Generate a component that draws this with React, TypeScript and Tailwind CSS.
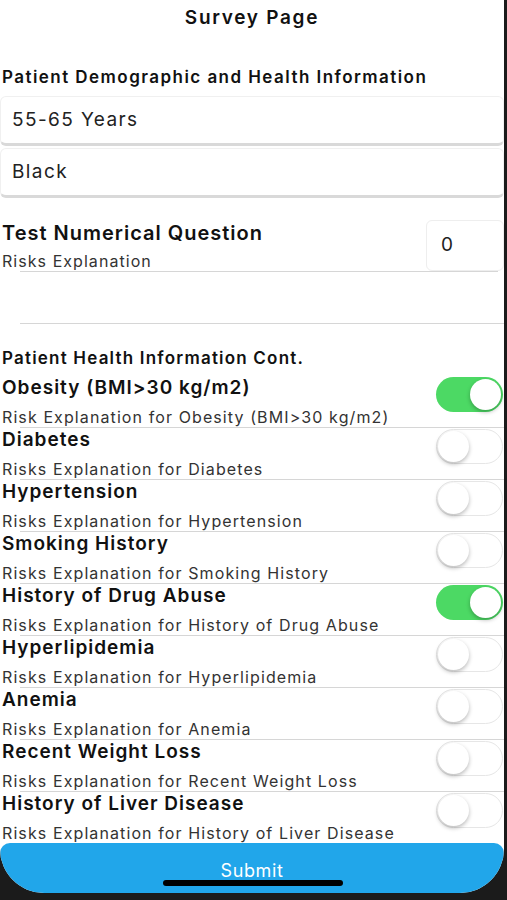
import React from 'react';

const conditions = [
    { name: 'Obesity (BMI>30 kg/m2)', note: 'Risk Explanation for Obesity (BMI>30 kg/m2)', on: true },
    { name: 'Diabetes', note: 'Risks Explanation for Diabetes', on: false },
    { name: 'Hypertension', note: 'Risks Explanation for Hypertension', on: false },
    { name: 'Smoking History', note: 'Risks Explanation for Smoking History', on: false },
    { name: 'History of Drug Abuse', note: 'Risks Explanation for History of Drug Abuse', on: true },
    { name: 'Hyperlipidemia', note: 'Risks Explanation for Hyperlipidemia', on: false },
    { name: 'Anemia', note: 'Risks Explanation for Anemia', on: false },
    { name: 'Recent Weight Loss', note: 'Risks Explanation for Recent Weight Loss', on: false },
    { name: 'History of Liver Disease', note: 'Risks Explanation for History of Liver Disease', on: false },
];

function Toggle({ on }: { on: boolean }) {
    return (
        <div
            className={
                on
                    ? 'flex h-[35px] w-[67px] items-center justify-end rounded-full bg-[#4cd964] px-[2px]'
                    : 'flex h-[35px] w-[67px] items-center justify-start rounded-full border border-[#e6e6e6] bg-white px-[1px]'
            }
        >
            <div className="h-[31px] w-[31px] rounded-full bg-white shadow-[0_2px_4px_rgba(0,0,0,0.28)]" />
        </div>
    );
}

function SelectBox({ label }: { label: string }) {
    return (
        <div className="flex h-[50px] items-center rounded-md border border-[#f0f0f0] border-b-[3px] border-b-[#d9d9d9] bg-white px-[11px] text-[19px] tracking-[1.4px] text-[#222]">
            {label}
        </div>
    );
}

export default function App() {
    return (
        <div className="h-[900px] w-[507px] bg-[#1b1b1b] font-['Inter',sans-serif]">
            <div className="relative flex h-[893px] w-[504px] flex-col overflow-hidden rounded-b-[44px] bg-white">
                <div className="flex h-[36px] items-center justify-center text-[19px] font-semibold tracking-[1.7px] text-[#111]">
                    Survey Page
                </div>
                <div className="flex-1 overflow-hidden">
                    <div className="mt-[29px] px-[2px] text-[17px] font-semibold leading-[24px] tracking-[1.45px] text-[#111]">
                        Patient Demographic and Health Information
                    </div>
                    <div className="mt-[7px] flex flex-col gap-[2px]">
                        <SelectBox label="55-65 Years" />
                        <SelectBox label="Black" />
                    </div>

                    <div className="relative mt-[22px] flex h-[52px] justify-between">
                        <div className="px-[2px]">
                            <div className="text-[20px] font-semibold leading-[26px] tracking-[1px] text-[#111]">Test Numerical Question</div>
                            <div className="mt-[5px] text-[16px] leading-[20px] tracking-[1.05px] text-[#333]">Risks Explanation</div>
                        </div>
                        <div className="flex h-[51px] w-[78px] items-center rounded-md border border-[#eeeeee] px-[14px] text-[19px] text-[#222]">
                            0
                        </div>
                        <div className="absolute bottom-0 left-[20px] right-[6px] h-px bg-[#d6d6d6]" />
                    </div>
                    <div className="ml-[20px] mt-[51px] h-px bg-[#d6d6d6]" />

                    <div className="mt-[22px] px-[2px] text-[17px] font-semibold leading-[24px] tracking-[1.2px] text-[#111]">
                        Patient Health Information Cont.
                    </div>
                    <div className="mt-[6px]">
                        {conditions.map((c, idx) => (
                            <div key={idx} className="relative flex h-[52px] justify-between">
                                <div className="px-[2px]">
                                    <div className="text-[19px] font-semibold leading-[24px] tracking-[1px] text-[#111]">{c.name}</div>
                                    <div className="mt-[6px] text-[16px] leading-[22px] tracking-[1.1px] text-[#333]">{c.note}</div>
                                </div>
                                <div className="mt-[1px] pr-[1px]">
                                    <Toggle on={c.on} />
                                </div>
                                <div className="absolute bottom-0 left-[20px] right-0 h-px bg-[#d6d6d6]" />
                            </div>
                        ))}
                    </div>
                </div>
                <div className="flex h-[50px] items-center justify-center rounded-t-[10px] bg-[#21a6ea] pt-[4px] text-[18px] tracking-[0.6px] text-white">
                    Submit
                </div>
                <div className="absolute bottom-[7px] left-[163px] h-[6px] w-[180px] rounded-full bg-black" />
            </div>
        </div>
    );
}
